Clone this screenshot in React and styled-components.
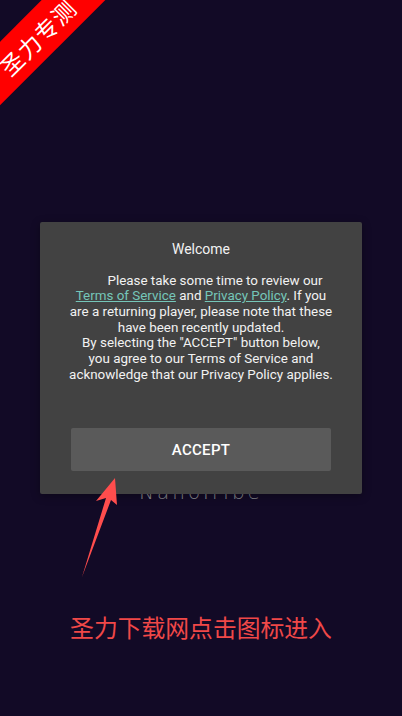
import styled, { createGlobalStyle } from 'styled-components';

const GlobalStyle = createGlobalStyle`
  html, body {
    margin: 0;
    padding: 0;
    background: #120a26;
  }
  * { box-sizing: border-box; }
`;

const Screen = styled.div`
  position: relative;
  width: 100%;
  height: 716px;
  overflow: hidden;
  background: #120a26;
  font-family: Roboto, "Noto Sans", sans-serif;
  display: flex;
  flex-direction: column;
  align-items: center;
  padding-top: 480px;
`;

const Brand = styled.div`
  font-family: "DejaVu Sans", sans-serif;
  font-weight: 200;
  font-size: 20px;
  letter-spacing: 3px;
  color: #8a8a8f;
`;

const Modal = styled.div`
  position: absolute;
  inset: 0;
  display: flex;
  align-items: center;
  justify-content: center;
`;

const Dialog = styled.div`
  width: 322px;
  background: #424242;
  border-radius: 2px;
  padding: 17px 31px 23px;
  color: #f2f2f2;
  text-align: center;
  box-shadow: 0 2px 8px rgba(0, 0, 0, 0.35);
`;

const Title = styled.div`
  font-size: 14px;
  line-height: 20px;
`;

const Body = styled.p`
  margin: 14px -12px 0;
  font-size: 13.4px;
  line-height: 15.7px;
  text-indent: 28px;
  white-space: nowrap;
`;

const TextLink = styled.a`
  color: #75c6b9;
  text-decoration: underline;
  text-underline-offset: 1px;
`;

const AcceptButton = styled.button`
  display: block;
  width: 100%;
  height: 43px;
  margin-top: 46px;
  border: none;
  border-radius: 2px;
  background: #5a5a5a;
  color: #ffffff;
  font-family: Roboto, sans-serif;
  font-weight: 500;
  font-size: 15px;
  letter-spacing: 0.3px;
`;

const Ribbon = styled.div`
  position: absolute;
  left: -43px;
  top: 14px;
  width: 160px;
  height: 45px;
  background: #ff0000;
  transform: rotate(-45deg);
  display: flex;
  align-items: center;
  justify-content: center;
  color: #ffffff;
  font-family: "Noto Sans CJK SC", sans-serif;
  font-size: 23px;
  letter-spacing: 1px;
`;

const Arrow = styled.svg`
  position: absolute;
  left: 0;
  top: 0;
  pointer-events: none;
`;

const Hint = styled.div`
  position: absolute;
  left: 0;
  right: 0;
  top: 611px;
  text-align: center;
  font-family: "Noto Sans CJK SC", sans-serif;
  font-size: 23.8px;
  line-height: 32px;
  color: #f04848;
`;

export default function App() {
  return (
    <>
      <GlobalStyle />
      <Screen>
        <Brand>NanoTribe</Brand>
        <Modal>
          <Dialog>
            <Title>Welcome</Title>
            <Body>
              Please take some time to review our
              <br />
              <TextLink>Terms of Service</TextLink> and <TextLink>Privacy Policy</TextLink>. If you
              <br />
              are a returning player, please note that these
              <br />
              have been recently updated.
              <br />
              By selecting the "ACCEPT" button below,
              <br />
              you agree to our Terms of Service and
              <br />
              acknowledge that our Privacy Policy applies.
            </Body>
            <AcceptButton>ACCEPT</AcceptButton>
          </Dialog>
        </Modal>
        <Arrow width="402" height="716" viewBox="0 0 402 716">
          <polygon
            points="115,478 117,505 111,500 82,577 106,498 96,501"
            fill="#ff4d4d"
          />
        </Arrow>
        <Hint>圣力下载网点击图标进入</Hint>
        <Ribbon>圣力专测</Ribbon>
      </Screen>
    </>
  );
}
